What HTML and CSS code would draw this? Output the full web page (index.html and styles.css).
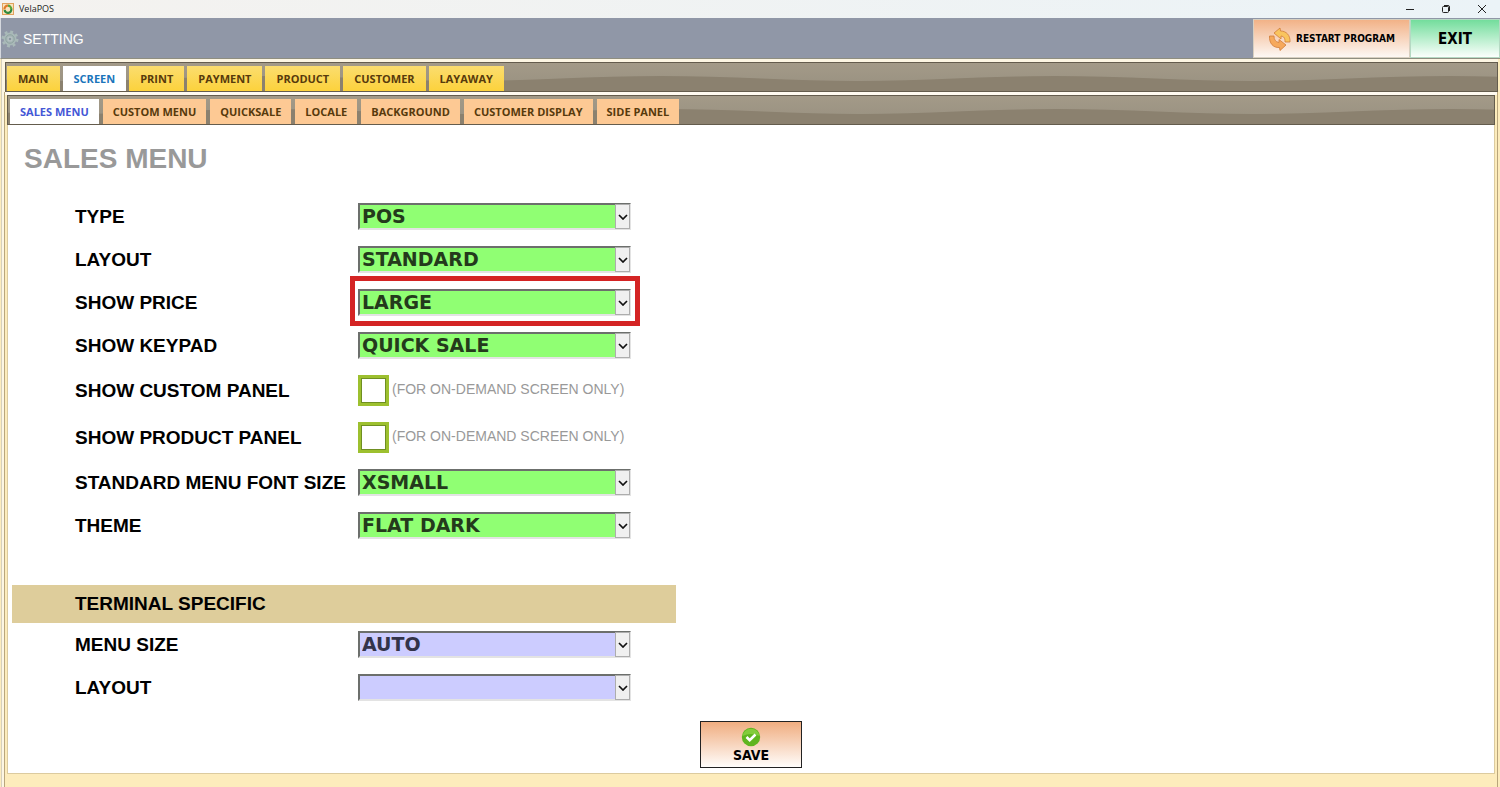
FILE: index.html
```html
<!DOCTYPE html>
<html>

<head>
	<meta charset="utf-8" />
	<title>VelaPOS</title>
	<link rel="stylesheet" href="styles.css">
</head>

<body>
	<svg class="defs" width="0" height="0">
		<symbol id="arrow" viewBox="0 0 10 6">
			<path d="M1 1l4 4 4-4" fill="none" stroke="#111" stroke-width="1.7" />
		</symbol>
		<pattern id="wave" width="394" height="30" patternUnits="userSpaceOnUse" x="64">
			<path d="M0 18C60 18 130 13 197 13S334 18 394 18V30H0z" fill="#8b816f" />
		</pattern>
	</svg>

	<div class="titlebar">
		<svg class="app-icon" width="12" height="12" viewBox="0 0 12 12">
			<rect x=".5" y=".5" width="11" height="11" fill="#fbe3bd" stroke="#e0a25c" />
			<path d="M2.5 6.5A3.3 3.3 0 0 1 6 2.7" fill="none" stroke="#e07a2a" stroke-width="2.2" />
			<path d="M6 2.7A3.3 3.3 0 0 1 9.3 6" fill="none" stroke="#58a63c" stroke-width="2.2" />
			<path d="M9.3 6A3.3 3.3 0 0 1 2.6 7" fill="none" stroke="#2f8a3e" stroke-width="2.2" />
		</svg>
		<span class="app-name">VelaPOS</span>
		<div class="win-buttons">
			<button type="button" aria-label="Minimize"><svg width="10" height="10" viewBox="0 0 10 10"><path d="M1 5.5h8" stroke="#222" /></svg></button>
			<button type="button" aria-label="Restore"><svg width="10" height="10" viewBox="0 0 10 10" fill="none" stroke="#222"><rect x="1.5" y="2.5" width="6" height="6" rx="1" /><path d="M3 1.5h4a1.5 1.5 0 0 1 1.5 1.5v4" /></svg></button>
			<button type="button" aria-label="Close"><svg width="10" height="10" viewBox="0 0 10 10"><path d="M1 1l8 8M9 1l-8 8" stroke="#222" /></svg></button>
		</div>
	</div>

	<div class="header">
		<svg class="gear" width="18" height="18" viewBox="0 0 18 18">
			<circle cx="9" cy="9" r="7" fill="none" stroke="#a9b9b8" stroke-width="3" stroke-dasharray="2.75 2.75" />
			<circle cx="9" cy="9" r="4.4" fill="none" stroke="#a9b9b8" stroke-width="4" />
			<circle cx="9" cy="9" r="4.2" fill="none" stroke="#8da19f" />
			<circle cx="9" cy="9" r="2" fill="#8a979f" stroke="#c3cfcd" />
		</svg>
		<span class="header-title">SETTING</span>
		<button type="button" class="btn-restart">
			<svg width="24" height="24" viewBox="0 0 24 24" fill="#f6a95c" stroke="#d07c38" stroke-width=".8">
				<path d="M6 6L12 1 12.500 4C18 4 22.500 8 22 15L17 15C17 11 16 9.500 13 9L13 12z" fill="#f9c45e" />
				<path d="M18 18L12 23.500 11.500 20.500C5 21 1 16 1.500 9L6 9C6 12.500 7.500 15 11 15.500L11 12.500z" />
			</svg>
			RESTART PROGRAM
		</button>
		<button type="button" class="btn-exit">EXIT</button>
	</div>

	<div class="frame">
		<div class="strip">
			<svg class="wave"><rect width="100%" height="100%" fill="url(#wave)" /></svg>
			<ul class="tabs tabs-main">
				<li><a href="#">MAIN</a></li>
				<li><a href="#" class="on">SCREEN</a></li>
				<li><a href="#">PRINT</a></li>
				<li><a href="#">PAYMENT</a></li>
				<li><a href="#">PRODUCT</a></li>
				<li><a href="#">CUSTOMER</a></li>
				<li><a href="#">LAYAWAY</a></li>
			</ul>
		</div>

		<div class="inner">
			<div class="strip">
				<svg class="wave"><rect width="100%" height="100%" fill="url(#wave)" /></svg>
				<ul class="tabs tabs-sub">
					<li><a href="#" class="on">SALES MENU</a></li>
					<li><a href="#">CUSTOM MENU</a></li>
					<li><a href="#">QUICKSALE</a></li>
					<li><a href="#">LOCALE</a></li>
					<li><a href="#">BACKGROUND</a></li>
					<li><a href="#">CUSTOMER DISPLAY</a></li>
					<li><a href="#">SIDE PANEL</a></li>
				</ul>
			</div>

			<form class="content">
				<h1>SALES MENU</h1>

				<div class="row">
					<label for="type">TYPE</label>
					<div class="field">
						<select id="type"><option>POS</option></select>
						<span class="drop"><svg width="10" height="6"><use href="#arrow" /></svg></span>
					</div>
				</div>
				<div class="row">
					<label for="layout">LAYOUT</label>
					<div class="field">
						<select id="layout"><option>STANDARD</option></select>
						<span class="drop"><svg width="10" height="6"><use href="#arrow" /></svg></span>
					</div>
				</div>
				<div class="row">
					<label for="price">SHOW PRICE</label>
					<div class="field marked">
						<select id="price"><option>LARGE</option></select>
						<span class="drop"><svg width="10" height="6"><use href="#arrow" /></svg></span>
					</div>
				</div>
				<div class="row">
					<label for="keypad">SHOW KEYPAD</label>
					<div class="field">
						<select id="keypad"><option>QUICK SALE</option></select>
						<span class="drop"><svg width="10" height="6"><use href="#arrow" /></svg></span>
					</div>
				</div>
				<div class="row row-check">
					<label for="custom-panel">SHOW CUSTOM PANEL</label>
					<input type="checkbox" id="custom-panel">
					<span class="hint">(FOR ON-DEMAND SCREEN ONLY)</span>
				</div>
				<div class="row row-check">
					<label for="product-panel">SHOW PRODUCT PANEL</label>
					<input type="checkbox" id="product-panel">
					<span class="hint">(FOR ON-DEMAND SCREEN ONLY)</span>
				</div>
				<div class="row">
					<label for="font-size">STANDARD MENU FONT SIZE</label>
					<div class="field">
						<select id="font-size"><option>XSMALL</option></select>
						<span class="drop"><svg width="10" height="6"><use href="#arrow" /></svg></span>
					</div>
				</div>
				<div class="row">
					<label for="theme">THEME</label>
					<div class="field">
						<select id="theme"><option>FLAT DARK</option></select>
						<span class="drop"><svg width="10" height="6"><use href="#arrow" /></svg></span>
					</div>
				</div>

				<h2>TERMINAL SPECIFIC</h2>

				<div class="row terminal">
					<label for="menu-size">MENU SIZE</label>
					<div class="field">
						<select id="menu-size"><option>AUTO</option></select>
						<span class="drop"><svg width="10" height="6"><use href="#arrow" /></svg></span>
					</div>
				</div>
				<div class="row terminal">
					<label for="terminal-layout">LAYOUT</label>
					<div class="field">
						<select id="terminal-layout"><option></option></select>
						<span class="drop"><svg width="10" height="6"><use href="#arrow" /></svg></span>
					</div>
				</div>

				<button type="button" class="btn-save">
					<svg width="20" height="20" viewBox="0 0 20 20">
						<circle cx="10" cy="10" r="9.200" fill="#5fb51f" />
						<path d="M1.500 9a8.600 8.600 0 0 1 17 0Q10 5 1.500 9z" fill="#83cc3c" />
						<path d="M5.500 10l3.200 3.200 5.800-5.700" fill="none" stroke="#fff" stroke-width="2.600" />
					</svg>
					SAVE
				</button>
			</form>
		</div>
	</div>
</body>

</html>
```
FILE: styles.css
```css
* {
	box-sizing: border-box;
}

body,
h1,
h2,
ul {
	margin: 0;
	padding: 0;
}

body {
	display: flex;
	flex-direction: column;
	min-height: 100vh;
	background: #fdecbc;
	font-family: "Liberation Sans", Arial, sans-serif;
	color: #000;
}

ul {
	list-style-type: none;
}

button {
	padding: 0;
	color: #000;
	font-family: "DejaVu Sans Condensed", Tahoma, sans-serif;
	font-weight: bold;
	cursor: pointer;
}

.defs {
	position: absolute;
}

/* window title */
.titlebar {
	display: flex;
	align-items: center;
	height: 18px;
	padding-left: 2px;
	background: linear-gradient(to right, #f4f2ef, #ebf3f7);
}

.app-name {
	margin-left: 5px;
	font: 9px/18px "Open Sans", "Segoe UI", sans-serif;
	color: #222;
}

.win-buttons {
	display: flex;
	margin-left: auto;
}

.win-buttons button {
	display: flex;
	align-items: center;
	justify-content: center;
	width: 36px;
	height: 16px;
	border: 0;
	background: none;
}

/* header bar */
.header {
	display: flex;
	align-items: center;
	height: 41px;
	padding-top: 1px;
	border-left: 1px solid #d5d8de;
	border-bottom: 1px solid #8f8e80;
	background: #9097a7;
}

.header-title {
	margin-left: 4px;
	font-size: 14px;
	color: #fff;
}

.btn-restart,
.btn-exit {
	height: 39px;
	border: 1px solid #d8cfc0;
}

.btn-restart {
	display: flex;
	align-items: center;
	justify-content: center;
	gap: 4px;
	width: 157px;
	margin-left: auto;
	background: linear-gradient(#f2b287, #fdf8f4);
	font-size: 10px;
}

.btn-exit {
	width: 90px;
	border-color: #b5d9c3;
	background: linear-gradient(#73dd9c, #fbfffc);
	font-size: 15px;
}

/* tab frames */
.frame {
	display: flex;
	flex-direction: column;
	flex: 1;
	margin: 0 2px 0 1px;
	padding-top: 3px;
	border-left: 1px solid #d6d0bd;
	background: #fdf6e3;
}

.frame > .strip {
	margin-left: 3px;
	padding-left: 1px;
}

.inner {
	display: flex;
	flex-direction: column;
	flex: 1;
	margin-left: 2px;
	padding: 3px 2px 13px;
	border: 1px solid #b9a67c;
	border-width: 0 1px;
	background: linear-gradient(#fffaf0 3px, #fdecbc 3px);
}

.strip {
	position: relative;
	height: 30px;
	padding: 3px 2px 0;
	border: 1px solid #645c4d;
	background: linear-gradient(#a39a88, #989080);
}

.wave {
	position: absolute;
	left: 0;
	top: 0;
	width: 100%;
	height: 100%;
}

.tabs {
	position: relative;
	display: flex;
	gap: 3px;
	width: max-content;
	font: bold 11px/25px "Open Sans", "Segoe UI", sans-serif;
}

.tabs a {
	display: block;
	padding: 0 11px;
	color: #573a0c;
	text-decoration: none;
}

.tabs-main a {
	background: linear-gradient(#fbdd6f, #fcd23c);
}

.tabs-sub {
	gap: 4px;
}

.tabs-sub a {
	padding: 0 10px;
	background: #fdc994;
}

.tabs a.on {
	background: #fff;
	color: #1b75bb;
}

.tabs-sub a.on {
	color: #4457d6;
}

/* settings form */
.content {
	display: flex;
	flex-direction: column;
	flex: 1;
	padding: 18px 4px 5px;
	border: 1px solid #dccb9f;
	border-top: 0;
	background: #fff;
}

h1 {
	margin: 0 0 20px 12px;
	font-size: 28px;
	line-height: 32px;
	color: #999;
}

.row {
	display: flex;
	align-items: center;
	height: 43px;
	padding-left: 63px;
}

.row-check {
	height: 47px;
}

.row label {
	width: 283px;
	font-size: 19px;
	font-weight: bold;
	white-space: nowrap;
}

.field {
	position: relative;
	width: 273px;
}

.field select {
	display: block;
	width: 100%;
	height: 27px;
	padding: 0 20px 0 2px;
	border: 2px solid;
	border-color: #6c6f6c #e3e3e3 #e3e3e3 #6c6f6c;
	border-radius: 0;
	appearance: none;
	background: #90ff73;
	color: #243a1c;
	font: bold 19px/23px "DejaVu Sans", Verdana, sans-serif;
}

.terminal select {
	background: #ccccff;
	color: #33334a;
}

.drop {
	position: absolute;
	top: 1px;
	right: 1px;
	display: flex;
	align-items: center;
	justify-content: center;
	width: 15px;
	height: 25px;
	border: 1px solid #adadad;
	background: #f0f0f0;
	pointer-events: none;
}

.marked::after {
	content: "";
	position: absolute;
	inset: -13px -9px -10px -8px;
	border: 5px solid #d42424;
	pointer-events: none;
}

.row-check input {
	width: 31px;
	height: 31px;
	margin: 0;
	border: 3px solid #9dc02f;
	outline: 1px solid #6f8f22;
	outline-offset: -4px;
	appearance: none;
	background: #fff;
}

.hint {
	margin-left: 3px;
	padding-bottom: 3px;
	font-size: 14px;
	color: #999;
}

h2 {
	width: 664px;
	margin-top: 38px;
	padding-left: 63px;
	background: #decd9b;
	font-size: 19px;
	line-height: 38px;
}

.btn-save {
	display: flex;
	flex-direction: column;
	align-items: center;
	justify-content: center;
	align-self: center;
	width: 102px;
	height: 47px;
	margin-top: auto;
	border: 1px solid #222;
	background: linear-gradient(#f0ad80, #fffdfb);
	font-size: 14px;
	line-height: 16px;
}
```
